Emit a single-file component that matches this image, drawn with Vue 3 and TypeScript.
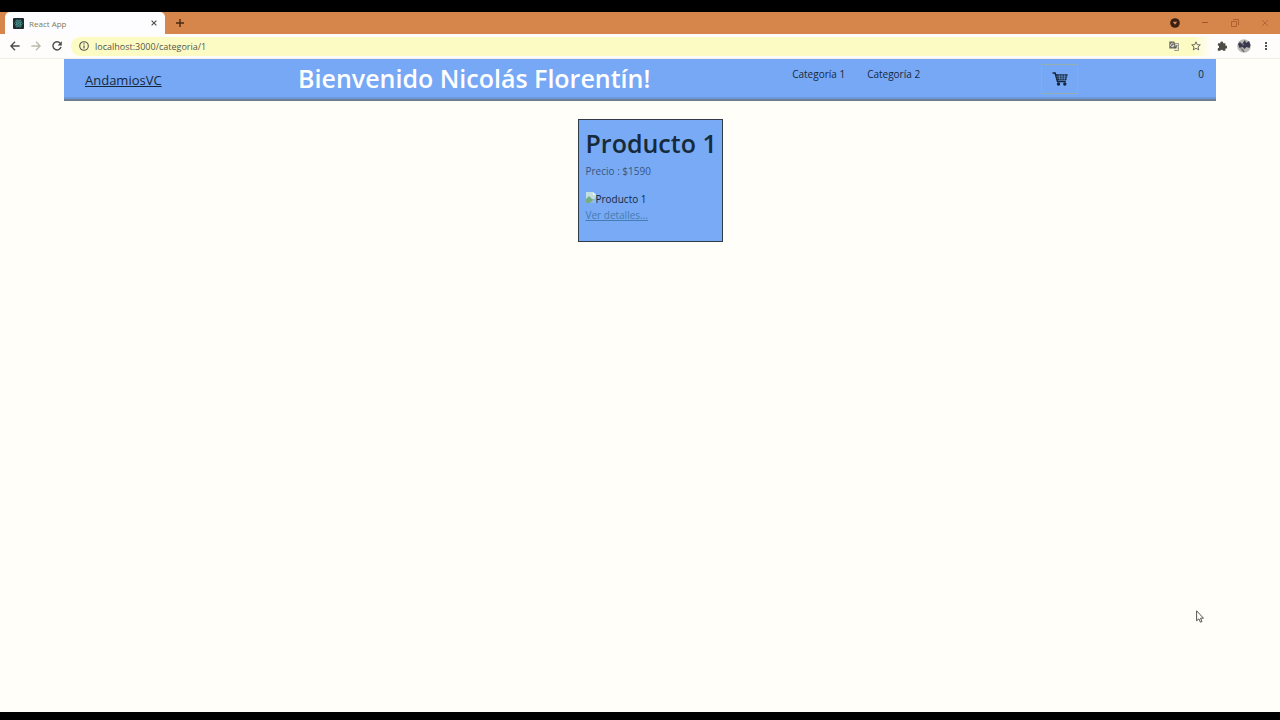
<script setup lang="ts">
import { ref } from 'vue'

interface Category {
  id: number
  name: string
}

const address = ref('localhost:3000/categoria/1')
const cartCount = ref(0)
const categories: Category[] = [
  { id: 1, name: 'Categoría 1' },
  { id: 2, name: 'Categoría 2' },
]
const product = { name: 'Producto 1', price: 1590 }
</script>

<template>
  <div class="screen">
    <div class="browser">
      <header class="tabstrip">
        <div class="tab">
          <svg class="favicon" viewBox="0 0 12 12" aria-hidden="true">
            <rect width="12" height="12" rx="1" fill="#1d2b30" />
            <g fill="none" stroke="#4f9a95" stroke-width="0.8">
              <ellipse cx="6" cy="6" rx="4.4" ry="1.7" />
              <ellipse cx="6" cy="6" rx="4.4" ry="1.7" transform="rotate(60 6 6)" />
              <ellipse cx="6" cy="6" rx="4.4" ry="1.7" transform="rotate(120 6 6)" />
            </g>
            <circle cx="6" cy="6" r="0.8" fill="#4f9a95" />
          </svg>
          <span class="tab-title">React App</span>
          <button class="icon-btn tab-close" aria-label="Cerrar pestaña">
            <svg width="6" height="6" viewBox="0 0 6 6"><path d="M.6.6l4.8 4.8M5.4.6L.6 5.4" stroke="#55554c" stroke-width="1.2" /></svg>
          </button>
        </div>
        <button class="icon-btn new-tab" aria-label="Nueva pestaña">
          <svg width="8" height="8" viewBox="0 0 8 8"><path d="M4 0v8M0 4h8" stroke="#4a2a14" stroke-width="1.4" /></svg>
        </button>
        <div class="window-controls">
          <button class="icon-btn" aria-label="Buscar pestañas">
            <svg width="10" height="10" viewBox="0 0 10 10"><circle cx="5" cy="5" r="4.8" fill="#3a2014" /><path d="M2.8 3.8h4.4L5 6.8z" fill="#d98c58" /></svg>
          </button>
          <button class="icon-btn" aria-label="Minimizar">
            <svg width="8" height="8" viewBox="0 0 8 8"><path d="M1 3.5h6" stroke="#a3572b" /></svg>
          </button>
          <button class="icon-btn" aria-label="Restaurar">
            <svg width="8" height="8" viewBox="0 0 8 8" fill="none" stroke="#b0602f"><path d="M.5 2.5h5v5h-5zM2 .5h5.5V6" /></svg>
          </button>
          <button class="icon-btn" aria-label="Cerrar">
            <svg width="8" height="8" viewBox="0 0 8 8"><path d="M1 1l6 6M7 1L1 7" stroke="#b8623a" /></svg>
          </button>
        </div>
      </header>

      <div class="toolbar">
        <div class="history">
          <button class="icon-btn" aria-label="Atrás">
            <svg width="10" height="10" viewBox="0 0 10 10" fill="none" stroke="#4b4b4b" stroke-width="1.3"><path d="M9.6 5H1M5 .8L.9 5 5 9.2" /></svg>
          </button>
          <button class="icon-btn" aria-label="Adelante">
            <svg width="10" height="10" viewBox="0 0 10 10" fill="none" stroke="#b9b9ac" stroke-width="1.3"><path d="M.4 5H9M5 .8L9.1 5 5 9.2" /></svg>
          </button>
          <button class="icon-btn" aria-label="Recargar">
            <svg width="10" height="10" viewBox="0 0 10 10"><path d="M8.2 2.2A4.1 4.1 0 1 0 9 6" fill="none" stroke="#4b4b4b" stroke-width="1.4" /><path d="M9.8.2v4.2H5.6z" fill="#4b4b4b" /></svg>
          </button>
        </div>
        <label class="omnibox">
          <svg width="10" height="10" viewBox="0 0 10 10" aria-hidden="true"><circle cx="5" cy="5" r="4.3" fill="none" stroke="#55554c" stroke-width="1.1" /><path d="M5 4.4v3M5 2.3v1.2" stroke="#55554c" stroke-width="1.2" /></svg>
          <input v-model="address" type="text" aria-label="Dirección" spellcheck="false" />
        </label>
        <div class="actions">
          <button class="icon-btn" aria-label="Traducir">
            <svg width="10" height="10" viewBox="0 0 10 10"><path d="M4 2.5h5.5v7H5.2" fill="#eeeed2" stroke="#85857a" stroke-width=".8" /><path d="M.3.5h5l2 7h-7z" fill="#66665c" /><path d="M4.8 3.1A1.7 1.7 0 1 0 5 4.5H3.4" fill="none" stroke="#fff" stroke-width=".8" /><path d="M6.6 4.5h2.2M7.8 4.2c0 1.4-.7 2.4-1.4 3M7 5.6l1.8 2" stroke="#66665c" stroke-width=".6" /></svg>
          </button>
          <button class="icon-btn" aria-label="Añadir a marcadores">
            <svg width="10" height="10" viewBox="0 0 10 10"><path d="M5 .8l1.2 2.8 3.1.3L7 5.9l.7 3L5 7.3 2.3 8.9l.7-3L.7 3.9l3.1-.3z" fill="none" stroke="#5b5b50" stroke-width=".9" /></svg>
          </button>
          <button class="icon-btn extensions" aria-label="Extensiones">
            <svg width="10" height="10" viewBox="0 0 10 10"><path d="M1 2.2h2.4a1.4 1.4 0 1 1 2.7 0h2.3v2.5a1.4 1.4 0 1 1 0 2.7v2.3H6.1a1.4 1.4 0 0 0-2.7 0H.8V7.2a1.3 1.3 0 0 0 0-2.6z" fill="#4d4d46" /></svg>
          </button>
          <button class="icon-btn" aria-label="Perfil">
            <svg width="14" height="14" viewBox="0 0 14 14"><circle cx="7" cy="7" r="6.8" fill="#b9b9b4" /><path d="M1 5l2-2 2 2 3-4 1 3 3-2 1.5 4-1 3-3-1-2 2-2-2-3 1z" fill="#38384f" /><path d="M3 9l3 1 2 3H6z" fill="#777780" /><path d="M5 4l2 1-1 2z" fill="#8585a0" /></svg>
          </button>
          <button class="icon-btn" aria-label="Menú">
            <svg width="10" height="10" viewBox="0 0 10 10" fill="#55554c"><rect x="4" y="1" width="2" height="2" /><rect x="4" y="4" width="2" height="2" /><rect x="4" y="7" width="2" height="2" /></svg>
          </button>
        </div>
      </div>

      <main class="page">
        <nav class="navbar">
          <a class="brand" href="#">AndamiosVC</a>
          <h1 class="welcome">Bienvenido Nicolás Florentín!</h1>
          <div class="categories">
            <a v-for="c in categories" :key="c.id" :href="'#categoria-' + c.id">{{ c.name }}</a>
          </div>
          <button class="cart" aria-label="Carrito">
            <svg width="16" height="14" viewBox="0 0 16 14"><path d="M.5 1h2.6l2.4 8.6h8.3" fill="none" stroke="#14243a" stroke-width="1.5" /><path d="M3.6 2.2h12.1l-1.4 6H5.2z" fill="#14243a" /><path d="M4.3 4.2h11M4.8 6.2h10M7.2 2.5l.6 5.5M10 2.5v5.5M12.8 2.5l-.6 5.5" stroke="#76a8f4" stroke-width=".6" /><circle cx="6.5" cy="12" r="1.7" fill="#14243a" /><circle cx="12.8" cy="12" r="1.7" fill="#14243a" /></svg>
          </button>
          <span class="count">{{ cartCount }}</span>
        </nav>

        <section class="products">
          <article class="product">
            <h2>{{ product.name }}</h2>
            <p class="price">Precio : ${{ product.price }}</p>
            <div class="picture">
              <svg width="10" height="11" viewBox="0 0 10 11" aria-hidden="true"><path d="M0 0h7l3 3v8H0z" fill="#c4dfe2" /><path d="M0 11V7l3-3 3 3 4 1v3z" fill="#78ad80" /><path d="M7 0v3h3z" fill="#f4f8ff" /><path d="M4 11l6-6v6z" fill="#90bdf0" /></svg>
              <span>{{ product.name }}</span>
            </div>
            <a class="details" href="#detalle">Ver detalles...</a>
          </article>
        </section>

        <svg class="cursor" width="8" height="13" viewBox="0 0 8 13" aria-hidden="true"><path d="M.6.8v10l2.3-2 1.5 3.4 1.6-.7-1.5-3.3h3z" fill="#fff" stroke="#44443a" stroke-width=".9" /></svg>
      </main>
    </div>
  </div>
</template>

<style>
body {
  margin: 0;
  background: #000;
}
</style>

<style scoped>
.screen {
  box-sizing: border-box;
  min-height: 100vh;
  padding: 12px 0 8px;
  display: flex;
  flex-direction: column;
  background: #000;
  color: #16283c;
  font-family: "Open Sans", "Noto Sans", sans-serif;
  font-size: 10px;
}
.browser {
  flex: 1;
  display: flex;
  flex-direction: column;
  background: #fffef9;
}
.icon-btn {
  display: flex;
  align-items: center;
  justify-content: center;
  padding: 0;
  border: 0;
  background: none;
}
.icon-btn svg,
.cart svg {
  display: block;
}
.tabstrip {
  display: flex;
  align-items: center;
  height: 22px;
  padding-left: 5px;
  background: #d6864a;
}
.tab {
  box-sizing: border-box;
  display: flex;
  align-items: center;
  gap: 5px;
  width: 160px;
  height: 100%;
  padding: 0 8px;
  border-radius: 5px 5px 0 0;
  background: #fdfcff;
}
.favicon {
  width: 11px;
  height: 11px;
}
.tab-title {
  flex: 1;
  font-size: 8px;
  color: #7d7b58;
}
.new-tab {
  width: 30px;
}
.window-controls {
  display: flex;
  margin-left: auto;
}
.window-controls .icon-btn {
  width: 30px;
}
.toolbar {
  box-sizing: border-box;
  display: flex;
  align-items: center;
  height: 25px;
  padding: 0 3px 0 10px;
  background: #fefdfb;
  border-bottom: 1px solid #f0efe8;
}
.history {
  display: flex;
  gap: 11px;
}
.omnibox {
  flex: 1;
  display: flex;
  align-items: center;
  gap: 6px;
  height: 19px;
  margin-left: 9px;
  padding-left: 8px;
  border-radius: 9px 0 0 9px;
  background: #fdfbc4;
}
.omnibox input {
  flex: 1;
  padding: 0;
  border: 0;
  outline: 0;
  background: none;
  font: inherit;
  font-size: 9px;
  color: #55554a;
}
.actions {
  display: flex;
  align-items: center;
  height: 19px;
  background: linear-gradient(90deg, #fdfbc4 30px, #fefdfb 48px);
}
.actions .icon-btn {
  width: 22px;
}
.actions .extensions {
  margin-left: 4px;
}
.page {
  position: relative;
  flex: 1;
  padding: 0 5%;
}
.navbar {
  box-sizing: border-box;
  display: grid;
  grid-template-columns: 213fr 494fr 249fr 157fr auto;
  align-items: start;
  min-height: 42px;
  padding: 0 12px 0 21px;
  background: #77a8f5;
  border-bottom: 2px solid #6f7f92;
  box-shadow: inset 0 -2px #6d98da;
}
.brand {
  padding-top: 12px;
  font-size: 13px;
  line-height: 18px;
  color: #16283c;
}
.welcome {
  margin: 0;
  font-size: 25px;
  line-height: 38px;
  font-weight: 600;
  color: #fff;
}
.categories {
  display: flex;
  gap: 22px;
  padding-top: 8px;
  line-height: 14px;
}
.categories a {
  color: #16283c;
  text-decoration: none;
}
.cart {
  display: flex;
  align-items: center;
  justify-content: center;
  width: 37px;
  height: 30px;
  margin-top: 5px;
  padding: 0;
  border: 1px solid #97aeae;
  background: none;
}
.count {
  padding-top: 8px;
  line-height: 14px;
}
.products {
  display: flex;
  justify-content: center;
  padding: 18px 0 0 20px;
}
.product {
  box-sizing: border-box;
  width: 145px;
  min-height: 123px;
  padding: 6px 7px;
  border: 1px solid #333c46;
  background: #78aaf6;
}
.product h2 {
  margin: 0;
  font-size: 25px;
  line-height: 34px;
  font-weight: 600;
  color: #172a3a;
  white-space: nowrap;
}
.price {
  margin: 4px 0 14px;
  line-height: 14px;
  color: #3a5580;
}
.picture {
  display: flex;
  line-height: 14px;
}
.details {
  display: inline-block;
  margin-top: 2px;
  line-height: 14px;
  color: #467caf;
}
.cursor {
  position: absolute;
  right: 76px;
  bottom: 89px;
}
</style>
